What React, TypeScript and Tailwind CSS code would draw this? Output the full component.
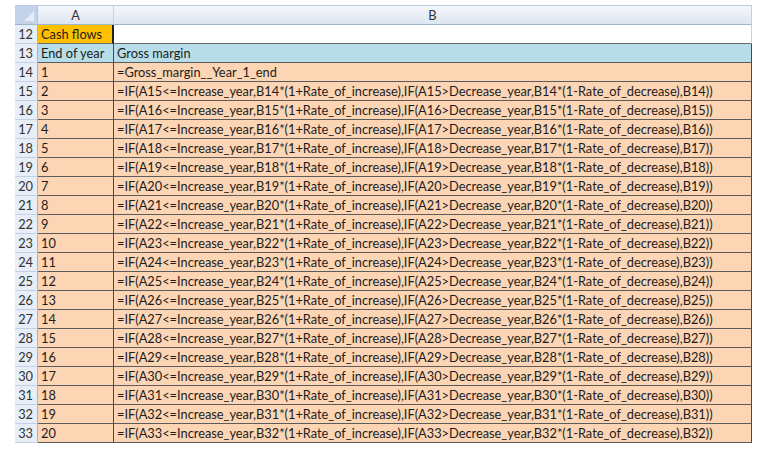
const rows = Array.from({ length: 19 }, (_, i) => {
  const r = 15 + i;
  return {
    num: r,
    year: String(i + 2),
    formula: `=IF(A${r}<=Increase_year,B${r - 1}*(1+Rate_of_increase),IF(A${r}>Decrease_year,B${r - 1}*(1-Rate_of_decrease),B${r - 1}))`,
  };
});

function RowNum({ n }: { n: number }) {
  return (
    <div className="flex items-center justify-end pr-[4px] bg-[#e8eef7] border-b border-[#c5d1e3] text-[#333] border-r border-r-[#9eb6ce]">
      {n}
    </div>
  );
}

export default function App() {
  return (
    <div className="w-[757px] h-[458px] bg-white pt-[5px] pl-[15px]">
      <div
        className="grid w-[737px] grid-cols-[23px_76px_1fr] grid-rows-[20px_repeat(22,19px)] text-[12.8px] leading-none text-[#1c1c1c]"
        style={{ fontFamily: 'Lato, "Open Sans", sans-serif' }}
      >
        {/* column header row */}
        <div className="relative bg-[#c3d3ea] border-t border-[#b9cbe4] border-b border-b-[#9eb6ce] border-r border-r-[#b3c6e0]">
          <div className="absolute right-[3px] bottom-[3px] w-0 h-0 border-l-[10px] border-l-transparent border-b-[10px] border-b-[#e6edf7]" />
        </div>
        <div className="flex items-center justify-center bg-gradient-to-b from-[#f4f7fb] to-[#dde5f0] border-t border-[#b9cbe4] border-b border-b-[#9eb6ce] border-r border-r-[#c5d1e3] text-[#333]">
          A
        </div>
        <div className="flex items-center justify-center bg-gradient-to-b from-[#f4f7fb] to-[#dde5f0] border-t border-[#b9cbe4] border-b border-b-[#9eb6ce] border-r border-r-[#c5d1e3] text-[#333]">
          B
        </div>

        {/* row 12 */}
        <RowNum n={12} />
        <div className="flex items-center pl-[3px] pt-[1px] bg-[#ffc000] border-b border-[#6b6b6b] border-r-2 border-r-[#222]">Cash flows</div>
        <div className="bg-white border-b border-[#6b6b6b] border-r border-r-[#d0d0d0]" />

        {/* row 13 */}
        <RowNum n={13} />
        <div className="flex items-center pl-[3px] pt-[1px] bg-[#b7dee8] border-b border-[#5c5c5c] border-r border-r-[#4a4a4a]">End of year</div>
        <div className="flex items-center pl-[3px] pt-[1px] bg-[#b7dee8] border-b border-[#5c5c5c] border-r border-r-[#4a4a4a]">Gross margin</div>

        {/* row 14 */}
        <RowNum n={14} />
        <div className="flex items-center pl-[3px] pt-[1px] bg-[#fcd5b4] border-b border-[#5c5c5c] border-r border-r-[#4a4a4a]">1</div>
        <div className="flex items-center pl-[3px] pt-[1px] bg-[#fcd5b4] border-b border-[#5c5c5c] border-r border-r-[#4a4a4a]">=Gross_margin__Year_1_end</div>

        {rows.map((row) => (
          <div key={row.num} className="contents">
            <RowNum n={row.num} />
            <div className="flex items-center pl-[3px] pt-[1px] bg-[#fcd5b4] border-b border-[#5c5c5c] border-r border-r-[#4a4a4a]">{row.year}</div>
            <div className="flex items-center pl-[3px] pt-[1px] bg-[#fcd5b4] border-b border-[#5c5c5c] border-r border-r-[#4a4a4a] whitespace-nowrap overflow-hidden">
              {row.formula}
            </div>
          </div>
        ))}
      </div>
    </div>
  );
}
